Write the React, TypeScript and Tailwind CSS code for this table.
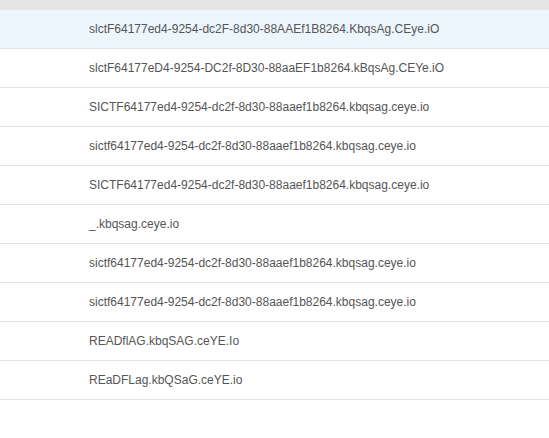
import React from "react";

const rows = [
  "slctF64177ed4-9254-dc2F-8d30-88AAEf1B8264.KbqsAg.CEye.iO",
  "slctF64177eD4-9254-DC2f-8D30-88aaEF1b8264.kBqsAg.CEYe.iO",
  "SICTF64177ed4-9254-dc2f-8d30-88aaef1b8264.kbqsag.ceye.io",
  "sictf64177ed4-9254-dc2f-8d30-88aaef1b8264.kbqsag.ceye.io",
  "SICTF64177ed4-9254-dc2f-8d30-88aaef1b8264.kbqsag.ceye.io",
  "_.kbqsag.ceye.io",
  "sictf64177ed4-9254-dc2f-8d30-88aaef1b8264.kbqsag.ceye.io",
  "sictf64177ed4-9254-dc2f-8d30-88aaef1b8264.kbqsag.ceye.io",
  "READflAG.kbqSAG.ceYE.Io",
  "REaDFLag.kbQSaG.ceYE.io",
];

export default function App() {
  return (
    <div className="w-[549px] h-[438px] bg-white font-['Liberation_Sans',Arial,sans-serif]">
      <div className="h-[10px] bg-[#e5e5e5]" />
      {rows.map((r, i) => (
        <div
          key={i}
          className={`h-[39px] border-b border-[#e3e3e3] flex items-center pl-[89px] text-[12px] text-[#555555] ${
            i === 0 ? "bg-[#edf5fd]" : "bg-white"
          }`}
        >
          {r}
        </div>
      ))}
    </div>
  );
}
